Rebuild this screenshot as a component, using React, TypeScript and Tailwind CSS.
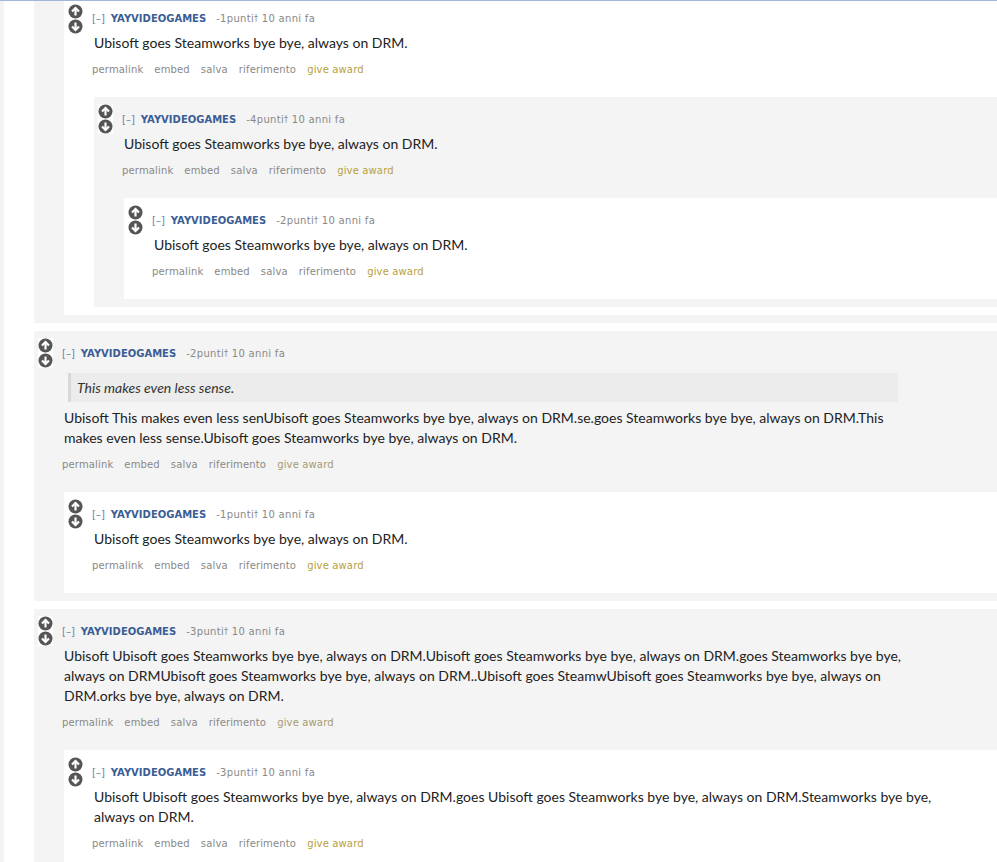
import React from "react";

const verdana = { fontFamily: '"DejaVu Sans", Verdana, sans-serif' };
const bodyFont = { fontFamily: 'Lato, "Segoe UI", sans-serif' };

function Arrows() {
  return (
    <div className="w-[15px] shrink-0 bg-white flex flex-col">
      <svg width="15" height="15" viewBox="0 0 15 15">
        <circle cx="7.5" cy="7.5" r="7" fill="#555" />
        <polyline points="4,7.5 7.5,4 11,7.5" fill="none" stroke="#fff" strokeWidth="2.2" strokeLinecap="butt" />
        <line x1="7.5" y1="4.5" x2="7.5" y2="11.5" stroke="#fff" strokeWidth="2.2" />
      </svg>
      <svg width="15" height="15" viewBox="0 0 15 15">
        <circle cx="7.5" cy="7.5" r="7" fill="#555" />
        <polyline points="4,7.5 7.5,11 11,7.5" fill="none" stroke="#fff" strokeWidth="2.2" strokeLinecap="butt" />
        <line x1="7.5" y1="3.5" x2="7.5" y2="10.5" stroke="#fff" strokeWidth="2.2" />
      </svg>
    </div>
  );
}

type C = {
  score: string;
  quote?: string;
  lines: string[];
  award: string;
  gray: boolean;
  children?: C[];
  first?: boolean;
};

function Comment({ c }: { c: C }) {
  return (
    <div className={(c.gray ? "bg-[#f4f4f4] " : "bg-white ") + (c.first ? "pt-[2px] pb-[8px]" : "pt-[7px] pb-[8px]")}>
      <div className="flex">
        <div className={c.first ? "ml-[4px] mt-[1px]" : "ml-[4px]"}>
          <Arrows />
        </div>
        <div className="ml-[9px] flex-1">
          <div className="mt-[9px] h-[14px] leading-[14px] text-[10px] whitespace-nowrap flex items-center" style={verdana}>
            <span className="text-[#6684b4] mr-[6px]">[–]</span>
            <span className="text-[#3b5d94] font-bold mr-[10px]">YAYVIDEOGAMES</span>
            <span className="text-[#888] tracking-[0.3px]">
              {c.score}punti<sup className="text-[8px] relative -top-[1px]">†</sup> 10 anni fa
            </span>
          </div>
          <div className="mt-[7px] ml-[2px] flow-root max-w-[838px] text-[14px] leading-[20px] text-[#222]" style={bodyFont}>
            {c.quote && (
              <div className="mt-[5px] mb-[6px] ml-[4px] mr-[4px] border-l-[3px] border-[#d8d8d8] bg-[#ececec] pl-[6px] py-[4px] leading-[21px] italic text-[#333]">
                {c.quote}
              </div>
            )}
            <p>
              {c.lines.map((l, i) => (
                <React.Fragment key={i}>
                  {i > 0 && <br />}
                  {l}
                </React.Fragment>
              ))}
            </p>
          </div>
          <div className="mt-[10px] mb-[12px] h-[14px] leading-[14px] text-[10px] text-[#888] tracking-[0.15px] flex gap-[11px] whitespace-nowrap" style={verdana}>
            <span>permalink</span>
            <span>embed</span>
            <span>salva</span>
            <span>riferimento</span>
            <span style={{ color: c.award }}>give award</span>
          </div>
        </div>
      </div>
      {c.children && c.children.length > 0 && (
        <div className="ml-[30px] mt-[8px] flex flex-col">
          {c.children.map((ch, i) => (
            <Comment key={i} c={ch} />
          ))}
        </div>
      )}
    </div>
  );
}

const GOLD = "#b9a03c";
const TAN = "#a89a70";
const UB = "Ubisoft goes Steamworks bye bye, always on DRM.";

const blockA: C = {
  score: "-1",
  lines: [UB],
  award: GOLD,
  gray: false,
  first: true,
  children: [
    {
      score: "-4",
      lines: [UB],
      award: GOLD,
      gray: true,
      children: [{ score: "-2", lines: [UB], award: GOLD, gray: false }],
    },
  ],
};

const blockD: C = {
  score: "-2",
  quote: "This makes even less sense.",
  lines: [
    "Ubisoft This makes even less senUbisoft goes Steamworks bye bye, always on DRM.se.goes Steamworks bye bye, always on DRM.This",
    "makes even less sense.Ubisoft goes Steamworks bye bye, always on DRM.",
  ],
  award: TAN,
  gray: true,
  children: [{ score: "-1", lines: [UB], award: GOLD, gray: false }],
};

const blockF: C = {
  score: "-3",
  lines: [
    "Ubisoft Ubisoft goes Steamworks bye bye, always on DRM.Ubisoft goes Steamworks bye bye, always on DRM.goes Steamworks bye bye,",
    "always on DRMUbisoft goes Steamworks bye bye, always on DRM..Ubisoft goes SteamwUbisoft goes Steamworks bye bye, always on",
    "DRM.orks bye bye, always on DRM.",
  ],
  award: TAN,
  gray: true,
  children: [
    {
      score: "-3",
      lines: [
        "Ubisoft Ubisoft goes Steamworks bye bye, always on DRM.goes Ubisoft goes Steamworks bye bye, always on DRM.Steamworks bye bye,",
        "always on DRM.",
      ],
      award: GOLD,
      gray: false,
    },
  ],
};

export default function App() {
  return (
    <div className="w-[997px] h-[862px] overflow-hidden bg-white border-t border-[#a3b5d9]">
      <div className="flex h-full">
        <div className="w-[4px] shrink-0 bg-[#f4f4f4]" />
        <div className="w-[30px] shrink-0 bg-white" />
        <div className="flex-1 flex flex-col gap-[8px]">
          <div className="bg-[#f4f4f4] pb-[8px] pl-[30px]">
            <Comment c={blockA} />
          </div>
          <Comment c={blockD} />
          <Comment c={blockF} />
        </div>
      </div>
    </div>
  );
}
